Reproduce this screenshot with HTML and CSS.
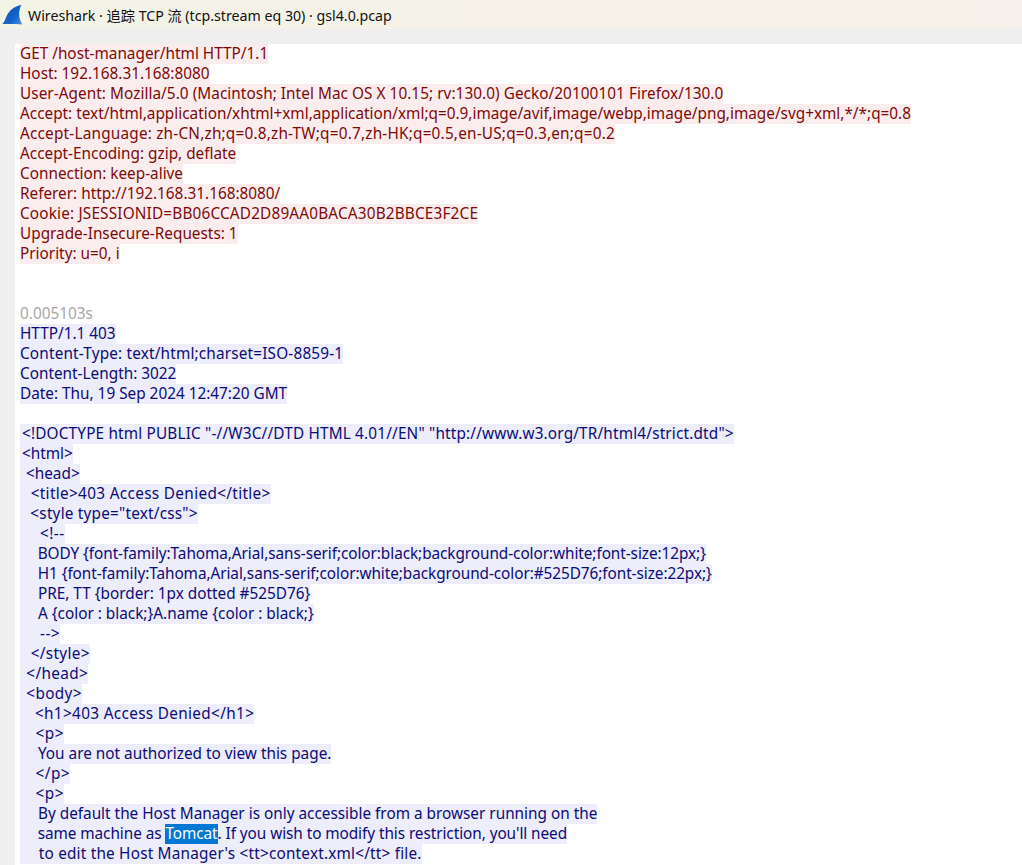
FILE: index.html
```html
<!DOCTYPE html>
<html lang="zh-CN">
<head>
<meta charset="utf-8">
<title>Wireshark</title>
<link rel="stylesheet" href="styles.css">
</head>
<body>
<header class="titlebar">
<svg class="fin" width="22" height="22" viewBox="0 0 22 22"><defs><linearGradient id="g" x1="0" y1="0" x2="1" y2="1"><stop offset="0" stop-color="#0b4eb0"/><stop offset="0.65" stop-color="#1565cc"/><stop offset="1" stop-color="#4d94e4"/></linearGradient></defs><path d="M0.300 20C3 18 3.500 13.500 6 9.500C9 5 14 2 19.500 0.800C16.500 6 16 13.500 20.300 20.500C14 19.800 6 19.800 0.300 20Z" fill="url(#g)"/></svg>
<span class="title">Wireshark · 追踪 TCP 流 (tcp.stream eq 30) · gsl4.0.pcap</span>
</header>
<main class="panel">
<div class="stream">
<div class="ln c"><span>GET /host-manager/html HTTP/1.1</span></div>
<div class="ln c"><span>Host: 192.168.31.168:8080</span></div>
<div class="ln c x1"><span>User-Agent: Mozilla/5.0 (Macintosh; Intel Mac OS X 10.15; rv:130.0) Gecko/20100101 Firefox/130.0</span></div>
<div class="ln c"><span>Accept: text/html,application/xhtml+xml,application/xml;q=0.9,image/avif,image/webp,image/png,image/svg+xml,*/*;q=0.8</span></div>
<div class="ln c x3"><span>Accept-Language: zh-CN,zh;q=0.8,zh-TW;q=0.7,zh-HK;q=0.5,en-US;q=0.3,en;q=0.2</span></div>
<div class="ln c"><span>Accept-Encoding: gzip, deflate</span></div>
<div class="ln c"><span>Connection: keep-alive</span></div>
<div class="ln c"><span>Referer: http://192.168.31.168:8080/</span></div>
<div class="ln c x2"><span>Cookie: JSESSIONID=BB06CCAD2D89AA0BACA30B2BBCE3F2CE</span></div>
<div class="ln c"><span>Upgrade-Insecure-Requests: 1</span></div>
<div class="ln c"><span>Priority: u=0, i</span></div>
<div class="ln"></div>
<div class="ln"></div>
<div class="ln t"><span>0.005103s</span></div>
<div class="ln s"><span>HTTP/1.1 403</span></div>
<div class="ln s x2"><span>Content-Type: text/html;charset=ISO-8859-1</span></div>
<div class="ln s"><span>Content-Length: 3022</span></div>
<div class="ln s"><span>Date: Thu, 19 Sep 2024 12:47:20 GMT</span></div>
<div class="ln"></div>
<div class="ln s m x2"><span>&lt;!DOCTYPE html PUBLIC "-//W3C//DTD HTML 4.01//EN" "http://www.w3.org/TR/html4/strict.dtd"&gt;</span></div>
<div class="ln s m"><span>&lt;html&gt;</span></div>
<div class="ln s m"><span> &lt;head&gt;</span></div>
<div class="ln s m x4"><span>  &lt;title&gt;403 Access Denied&lt;/title&gt;</span></div>
<div class="ln s m x3"><span>  &lt;style type="text/css"&gt;</span></div>
<div class="ln s m x5"><span>    &lt;!--</span></div>
<div class="ln s m n"><span>    BODY {font-family:Tahoma,Arial,sans-serif;color:black;background-color:white;font-size:12px;}</span></div>
<div class="ln s m n"><span>    H1 {font-family:Tahoma,Arial,sans-serif;color:white;background-color:#525D76;font-size:22px;}</span></div>
<div class="ln s m"><span>    PRE, TT {border: 1px dotted #525D76}</span></div>
<div class="ln s m"><span>    A {color : black;}A.name {color : black;}</span></div>
<div class="ln s m x5"><span>    --&gt;</span></div>
<div class="ln s m x4"><span>  &lt;/style&gt;</span></div>
<div class="ln s m x4"><span> &lt;/head&gt;</span></div>
<div class="ln s m x4"><span> &lt;body&gt;</span></div>
<div class="ln s m x4"><span>   &lt;h1&gt;403 Access Denied&lt;/h1&gt;</span></div>
<div class="ln s m x5"><span>   &lt;p&gt;</span></div>
<div class="ln s m"><span>    You are not authorized to view this page.</span></div>
<div class="ln s m x5"><span>   &lt;/p&gt;</span></div>
<div class="ln s m x5"><span>   &lt;p&gt;</span></div>
<div class="ln s m"><span>    By default the Host Manager is only accessible from a browser running on the</span></div>
<div class="ln s m n"><span>    same machine as <mark class="sel">Tomcat</mark>. If you wish to modify this restriction, you'll need</span></div>
<div class="ln s m x3"><span>    to edit the Host Manager's &lt;tt&gt;context.xml&lt;/tt&gt; file.</span></div>
</div>
</main>
</body>
</html>
```
FILE: styles.css
```css
html, body { margin: 0; height: 100%; overflow: hidden; }
body { width: 1022px; height: 865px; background: #efefef; font-family: "Noto Sans", "Noto Sans CJK SC", sans-serif; }
.titlebar { height: 29px; background: linear-gradient(90deg, #f3f3e6, #f8f0ea); display: flex; align-items: center; gap: 4px; padding-left: 2px; }
.fin { flex: none; }
.title { font-size: 14.2px; color: #111; }
.panel { margin: 15px 0 0 15px; background: #fff; height: 821px; padding-left: 5px; overflow: hidden; }
.stream { font-size: 15.33px; line-height: 20px; }
.ln { height: 20px; white-space: pre; }
.ln span { display: inline-block; height: 20px; line-height: 19px; vertical-align: top; }
.c { color: #7d0a0a; }
.c span { background: #fbeded; }
.s { color: #0c0c78; }
.s span { background: #ededfb; }
.m span { padding-left: 2px; }
.n { letter-spacing: -0.06px; }
.x1 { letter-spacing: 0.05px; }
.x2 { letter-spacing: 0.17px; }
.x3 { letter-spacing: 0.2px; }
.x4 { letter-spacing: 0.33px; }
.x5 { letter-spacing: 0.5px; }
.t { color: #a8a8a8; }
.sel { display: inline-block; height: 20px; vertical-align: top; background: #0078d4; color: #fff; }
```
